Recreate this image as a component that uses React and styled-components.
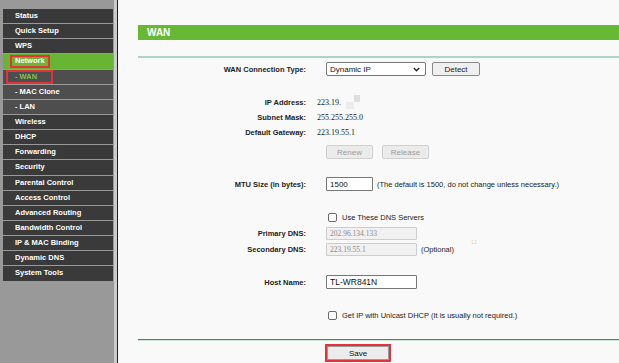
import React from 'react';
import styled, { createGlobalStyle } from 'styled-components';

const GlobalStyle = createGlobalStyle`
	html, body {
		margin: 0;
		padding: 0;
		background: #f9f9f9;
	}
	body {
		font-family: "Liberation Sans", Arial, sans-serif;
	}
`;

const menu = [
	{ label: 'Status' },
	{ label: 'Quick Setup' },
	{ label: 'WPS' },
	{ label: 'Network', kind: 'active', mark: { l: -5, r: -5, t: 1, b: 0 } },
	{ label: '- WAN', kind: 'current', mark: { l: -9, r: -16, t: 0, b: 0 } },
	{ label: '- MAC Clone', kind: 'sub' },
	{ label: '- LAN', kind: 'sub' },
	{ label: 'Wireless' },
	{ label: 'DHCP' },
	{ label: 'Forwarding' },
	{ label: 'Security' },
	{ label: 'Parental Control' },
	{ label: 'Access Control' },
	{ label: 'Advanced Routing' },
	{ label: 'Bandwidth Control' },
	{ label: 'IP & MAC Binding' },
	{ label: 'Dynamic DNS' },
	{ label: 'System Tools' },
];

function App() {
	return (
		<>
			<GlobalStyle />
			<Page>
				<Sidebar>
					{menu.map(item => (
						<NavItem key={item.label} $kind={item.kind}>
							{item.mark ? (
								<Mark $l={item.mark.l} $r={item.mark.r} $t={item.mark.t} $b={item.mark.b}>{item.label}</Mark>
							) : item.label}
						</NavItem>
					))}
				</Sidebar>
				<Content>
					<TitleBar>WAN</TitleBar>
					<TopRule />

					<Row $h={14} $mt={4}>
						<Label>WAN Connection Type:</Label>
						<Cell>
							<Select>
								Dynamic IP
								<svg width="7" height="5" viewBox="0 0 7 5">
									<path d="M0.8 0.9 L3.5 3.7 L6.2 0.9" fill="none" stroke="#222" strokeWidth="1.4" />
								</svg>
							</Select>
							<Button $w={48} $ml={6}>Detect</Button>
						</Cell>
					</Row>

					<Row $h={15} $mt={19}>
						<Label>IP Address:</Label>
						<Cell>
							<Value>223.19.</Value>
							<Smudge $w={8} $h={7} $dy={3} $c="#ececec" />
							<Smudge $w={6} $h={7} $dy={-4} $c="#dedede" />
						</Cell>
					</Row>
					<Row $h={15}>
						<Label>Subnet Mask:</Label>
						<Cell><Value>255.255.255.0</Value></Cell>
					</Row>
					<Row $h={15}>
						<Label>Default Gateway:</Label>
						<Cell><Value>223.19.55.1</Value></Cell>
					</Row>
					<Row $h={14} $mt={5}>
						<Label />
						<Cell>
							<Button $w={47} $ml={9} $disabled>Renew</Button>
							<Button $w={47} $ml={9} $disabled>Release</Button>
						</Cell>
					</Row>

					<Row $h={14} $mt={18}>
						<Label>MTU Size (in bytes):</Label>
						<Cell>
							<Field $w={47} readOnly value="1500" />
							<Note>(The default is 1500, do not change unless necessary.)</Note>
						</Cell>
					</Row>

					<Row $h={14} $mt={19}>
						<Label />
						<Cell>
							<Check type="checkbox" readOnly />
							<CheckText>Use These DNS Servers</CheckText>
						</Cell>
					</Row>
					<Row $h={13} $mt={3}>
						<Label>Primary DNS:</Label>
						<Cell>
							<Field $w={91} $h={13} $off readOnly value="202.96.134.133" />
							<Stray>11</Stray>
						</Cell>
					</Row>
					<Row $h={13} $mt={3}>
						<Label>Secondary DNS:</Label>
						<Cell>
							<Field $w={91} $h={13} $off readOnly value="223.19.55.1" />
							<Note>(Optional)</Note>
						</Cell>
					</Row>

					<Row $h={14} $mt={19}>
						<Label>Host Name:</Label>
						<Cell>
							<Field $w={91} $big readOnly value="TL-WR841N" />
						</Cell>
					</Row>

					<Row $h={14} $mt={19}>
						<Label />
						<Cell>
							<Check type="checkbox" readOnly />
							<CheckText>Get IP with Unicast DHCP (It is usually not required.)</CheckText>
						</Cell>
					</Row>

					<BottomRule />

					<Row $h={14} $mt={5}>
						<Label />
						<Cell>
							<SaveButton>Save</SaveButton>
						</Cell>
					</Row>
				</Content>
			</Page>
		</>
	);
}

const Page = styled.div`
	display: flex;
	width: 619px;
	height: 363px;
	overflow: hidden;
	background: #f9f9f9;
`;
const Sidebar = styled.nav`
	box-sizing: border-box;
	width: 117px;
	flex: none;
	padding: 9px 1px 0 3px;
	background: #999999;
	border-right: 3px solid #cbcbcb;
	display: flex;
	flex-direction: column;
	gap: 1px;
`;
const NavItem = styled.div`
	height: 14.15px;
	line-height: 14px;
	padding-left: 12px;
	font-size: 7.5px;
	font-weight: bold;
	white-space: nowrap;
	color: ${p => (p.$kind === 'current' ? '#7fc644' : '#ffffff')};
	background: ${p => {
		if (p.$kind === 'active') return '#68b534';
		if (p.$kind === 'sub' || p.$kind === 'current') return '#4e4e4e';
		return '#3a3a3a';
	}};
`;
const Mark = styled.span`
	position: relative;
	display: inline-block;

	&::after {
		content: '';
		position: absolute;
		left: ${p => p.$l}px;
		right: ${p => p.$r}px;
		top: ${p => p.$t}px;
		bottom: ${p => p.$b}px;
		border: 2px solid #e5323a;
	}
`;
const Content = styled.main`
	flex: 1;
	border-left: 1px solid #1e1e1e;
	padding: 25px 0 0 20px;
	display: flex;
	flex-direction: column;
	min-width: 0;
`;
const TitleBar = styled.div`
	height: 15px;
	line-height: 15px;
	padding-left: 9px;
	background: #67b834;
	color: #ffffff;
	font-size: 10px;
	font-weight: bold;
`;
const TopRule = styled.div`
	height: 2px;
	margin-top: 16px;
	background: #b0d3c4;
`;
const BottomRule = styled.div`
	height: 2px;
	margin-top: 17px;
	background: linear-gradient(#3f8d5d 50%, #cfe3d6 50%);
`;
const Row = styled.div`
	display: grid;
	grid-template-columns: 168px 1fr;
	column-gap: 11px;
	align-items: center;
	height: ${p => p.$h}px;
	margin-top: ${p => p.$mt || 0}px;
`;
const Label = styled.div`
	text-align: right;
	font-size: 7.5px;
	font-weight: bold;
	color: #222222;
	white-space: nowrap;
`;
const Cell = styled.div`
	display: flex;
	align-items: center;
	height: 100%;
	white-space: nowrap;
`;
const Value = styled.span`
	font-family: "Liberation Serif", "Times New Roman", serif;
	font-size: 8px;
	color: #222222;
`;
const Smudge = styled.span`
	display: inline-block;
	width: ${p => p.$w}px;
	height: ${p => p.$h}px;
	margin-left: ${p => (p.$dy > 0 ? 5 : 0)}px;
	transform: translateY(${p => p.$dy}px);
	background: ${p => p.$c};
`;
const Select = styled.div`
	box-sizing: border-box;
	margin-left: 9px;
	width: 100px;
	height: 14px;
	padding: 0 5px 0 3px;
	display: flex;
	align-items: center;
	justify-content: space-between;
	border: 1px solid #767676;
	border-radius: 2px;
	background: #ffffff;
	font-size: 8px;
	color: #111111;
`;
const Button = styled.div`
	box-sizing: border-box;
	width: ${p => p.$w}px;
	height: 14px;
	margin-left: ${p => p.$ml}px;
	display: flex;
	align-items: center;
	justify-content: center;
	font-size: 8px;
	border-radius: 2px;
	border: 1px solid ${p => (p.$disabled ? '#d0d0d0' : '#8a8a8a')};
	background: ${p => (p.$disabled ? '#ebebeb' : '#efefef')};
	color: ${p => (p.$disabled ? '#9c9c9c' : '#1a1a1a')};
`;
const SaveButton = styled.div`
	box-sizing: border-box;
	width: 62px;
	height: 14px;
	margin-left: 10px;
	display: flex;
	align-items: center;
	justify-content: center;
	font-size: 8px;
	color: #111111;
	background: #ececec;
	border: 1px solid #9a9a9a;
	outline: 2px solid #e5323a;
`;
const Field = styled.input`
	box-sizing: border-box;
	width: ${p => p.$w}px;
	height: ${p => p.$h || 14}px;
	margin: 0 0 0 9px;
	padding: 0 0 0 3px;
	border: 1px solid ${p => (p.$off ? '#cdcdcd' : '#767676')};
	border-radius: 1px;
	background: ${p => (p.$off ? '#f1f1f1' : '#ffffff')};
	font-family: ${p => (p.$off ? '"Liberation Serif", "Times New Roman", serif' : '"Liberation Sans", Arial, sans-serif')};
	font-size: ${p => (p.$off ? 7.5 : p.$big ? 8.5 : 8)}px;
	color: ${p => (p.$off ? '#8a8a8a' : '#111111')};
	outline: none;
`;
const Note = styled.span`
	margin-left: 4px;
	font-size: 7.5px;
	color: #222222;
`;
const Stray = styled.span`
	margin-left: 54px;
	transform: translateY(8px);
	font-size: 6px;
	color: #f0dca2;
`;
const Check = styled.input`
	appearance: none;
	box-sizing: border-box;
	width: 9px;
	height: 9px;
	margin: 0 0 0 11px;
	border: 1px solid #6a6a6a;
	border-radius: 2px;
	background: #ffffff;
`;
const CheckText = styled.span`
	margin-left: 5px;
	font-size: 7.5px;
	color: #222222;
`;

export default App;
